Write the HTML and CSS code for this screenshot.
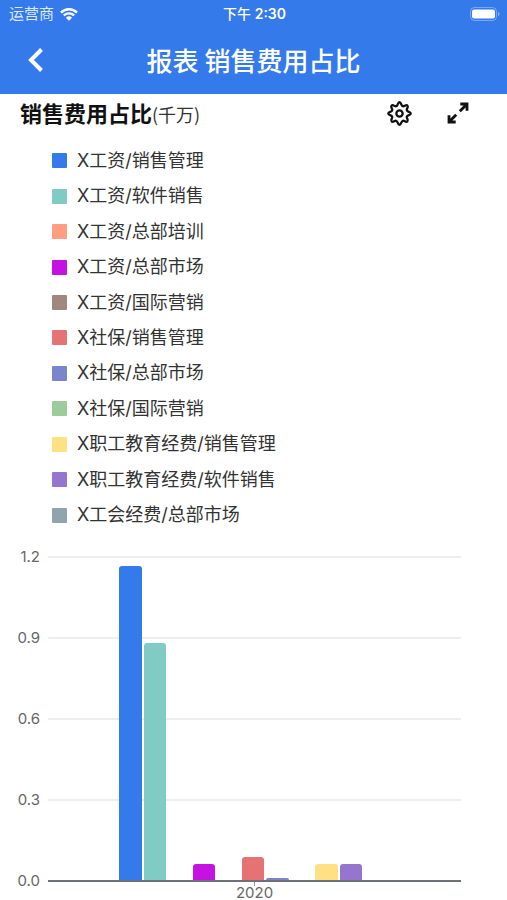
FILE: index.html
```html
<!DOCTYPE html>
<html lang="zh-CN">
<head>
<meta charset="utf-8">
<meta name="viewport" content="width=device-width, initial-scale=1">
<title>报表 销售费用占比</title>
<link rel="stylesheet" href="styles.css">
</head>
<body>
<header class="top">
  <div class="status">
    <div class="carrier">
      <span>运营商</span>
      <svg class="wifi" viewBox="0 0 18 13" aria-hidden="true">
        <path d="M1 4.6a11.4 11.4 0 0 1 16 0M3.8 7.5a7.4 7.4 0 0 1 10.4 0" fill="none" stroke="#fff" stroke-width="2.4"/>
        <path d="M9 12.8 5.9 9.7a4.5 4.5 0 0 1 6.2 0z" fill="#fff"/>
      </svg>
    </div>
    <span class="time">下午 <b>2:30</b></span>
    <svg class="battery" viewBox="0 0 30 14" aria-hidden="true">
      <rect x="0.5" y="0.5" width="26" height="13" rx="4" fill="none" stroke="#fff" stroke-opacity=".35"/>
      <rect x="2" y="2.5" width="23" height="9" rx="2.2" fill="#fff"/>
      <path d="M28 5v4c2-.6 2-3.400 0-4z" fill="#fff" fill-opacity=".4"/>
    </svg>
  </div>
  <nav class="bar">
    <button class="icon-button" type="button" aria-label="返回">
      <svg class="back" viewBox="0 0 16 24" aria-hidden="true"><path d="M13.500 1.500 3 12l10.500 10.500" fill="none" stroke="#fff" stroke-width="4"/></svg>
    </button>
    <h1>报表 销售费用占比</h1>
  </nav>
</header>
<main>
  <div class="heading">
    <h2>销售费用占比<small>(千万)</small></h2>
    <button class="icon-button" type="button" aria-label="设置">
      <svg class="gear" viewBox="0 0 24 24" aria-hidden="true" fill="none" stroke="#111" stroke-width="2.200" stroke-linejoin="round">
        <path d="M12 1.200C13.900 1.200 13.300 4.500 15.200 5C16.700 5.400 18.300 3 19.600 4.400C21 5.700 18.600 7.300 19 8.800C19.500 10.700 22.800 10.100 22.800 12C22.800 13.900 19.500 13.300 19 15.200C18.600 16.700 21 18.300 19.600 19.600C18.300 21 16.700 18.600 15.200 19C13.300 19.500 13.900 22.800 12 22.800C10.100 22.800 10.700 19.500 8.800 19C7.300 18.600 5.700 21 4.400 19.600C3 18.300 5.400 16.700 5 15.200C4.500 13.300 1.200 13.900 1.200 12C1.200 10.100 4.500 10.700 5 8.800C5.400 7.300 3 5.700 4.400 4.400C5.700 3 7.300 5.400 8.800 5C10.700 4.500 10.100 1.200 12 1.200Z"/>
        <circle cx="12" cy="12" r="3"/>
      </svg>
    </button>
    <button class="icon-button" type="button" aria-label="全屏">
      <svg class="expand" viewBox="0 0 22 22" aria-hidden="true" fill="none" stroke="#111" stroke-width="2.800">
        <path d="M13.300 2h6.700v6.700M19.800 2.200 12.800 9.200M8.700 20H2v-6.700M2.200 19.800 9.200 12.800"/>
      </svg>
    </button>
  </div>
  <ul class="legend">
    <li><i class="blue"></i>X工资/销售管理</li>
    <li><i class="teal"></i>X工资/软件销售</li>
    <li><i class="orange"></i>X工资/总部培训</li>
    <li><i class="magenta"></i>X工资/总部市场</li>
    <li><i class="brown"></i>X工资/国际营销</li>
    <li><i class="red"></i>X社保/销售管理</li>
    <li><i class="indigo"></i>X社保/总部市场</li>
    <li><i class="green"></i>X社保/国际营销</li>
    <li><i class="yellow"></i>X职工教育经费/销售管理</li>
    <li><i class="purple"></i>X职工教育经费/软件销售</li>
    <li><i class="slate"></i>X工会经费/总部市场</li>
  </ul>
  <section class="chart" aria-label="销售费用占比">
    <div class="scale"><span>1.2</span><span>0.9</span><span>0.6</span><span>0.3</span><span>0.0</span></div>
    <div class="plot">
      <div class="lines"><b></b><b></b><b></b><b></b></div>
      <div class="bars">
        <i class="blue" style="height:96.8%"></i>
        <i class="teal" style="height:73.2%"></i>
        <i class="orange" style="height:0%"></i>
        <i class="magenta" style="height:4.8%"></i>
        <i class="brown" style="height:0%"></i>
        <i class="red" style="height:7.1%"></i>
        <i class="indigo" style="height:0.6%"></i>
        <i class="green" style="height:0%"></i>
        <i class="yellow" style="height:4.8%"></i>
        <i class="purple" style="height:4.8%"></i>
        <i class="slate" style="height:0%"></i>
      </div>
    </div>
    <div class="category">2020</div>
  </section>
</main>
</body>
</html>
```
FILE: styles.css
```css
* { box-sizing: border-box; }

body {
  margin: 0;
  background: #fff;
  color: #333;
  font-family: Inter, "Noto Sans CJK SC", sans-serif;
}

.top {
  background: #347aeb;
  color: #fff;
}

.status {
  display: grid;
  grid-template-columns: 1fr auto 1fr;
  align-items: center;
  height: 28px;
  padding: 0 7px 0 9px;
  font-size: 14px;
  line-height: 20px;
}

.carrier {
  display: flex;
  align-items: center;
  gap: 6px;
  color: #dde9fc;
  font-size: 15px;
}

.wifi { width: 18px; height: 13px; }
.time { font-weight: 500; }
.time b { font-weight: 600; }
.battery { width: 30px; height: 14px; justify-self: end; }

.bar {
  display: grid;
  grid-template-columns: 72px 1fr 72px;
  align-items: center;
  height: 66px;
  padding-bottom: 3px;
}

.icon-button {
  display: flex;
  align-items: center;
  justify-content: center;
  padding: 0;
  border: 0;
  background: none;
}

.back { width: 16px; height: 24px; }

h1 {
  margin: 0;
  text-align: center;
  font: 500 26px/40px "Noto Sans CJK SC", sans-serif;
}

.heading {
  display: flex;
  align-items: center;
  gap: 35px;
  height: 38px;
  padding: 0 38px 0 20px;
}

h2 {
  flex: 1;
  margin: 0;
  color: #111;
  font: 700 22px/32px "Noto Sans CJK SC", sans-serif;
}

h2 small {
  color: #333;
  font-size: 18px;
  font-weight: 400;
}

.gear { width: 25px; height: 25px; }
.expand { width: 22px; height: 22px; }

.legend {
  display: flex;
  flex-direction: column;
  height: 390px;
  margin: 11px 0 0;
  padding: 0 52px;
  list-style: none;
  font-size: 18px;
  line-height: 24px;
}

.legend li {
  flex: 1;
  display: flex;
  align-items: center;
  gap: 10px;
}

.legend i {
  width: 15px;
  height: 15px;
  border-radius: 1px;
}

.chart {
  display: grid;
  grid-template-columns: 40px 1fr;
  column-gap: 8px;
  padding: 23px 46px 0 0;
  color: #666;
  font-size: 15px;
  line-height: 20px;
}

.scale {
  display: flex;
  flex-direction: column;
  justify-content: space-between;
  margin: -9px 0;
  text-align: right;
}

.plot {
  display: grid;
  height: 326px;
  border-bottom: 2px solid #6e7079;
}

.lines, .bars { grid-area: 1 / 1; }

.lines {
  display: grid;
  grid-template-rows: repeat(4, 1fr);
}

.lines b { border-top: 2px solid #eee; }

.bars {
  display: grid;
  grid-template-columns: repeat(11, 1fr);
  column-gap: 2px;
  align-items: end;
  padding: 0 18% 0 17.3%;
}

.bars i { border-radius: 3px 3px 0 0; }

.category {
  display: flex;
  flex-direction: column;
  align-items: center;
  grid-column: 2;
  line-height: 14px;
}

.category::before {
  content: "";
  width: 1px;
  height: 4px;
  background: #999;
}

.blue { background: #347aeb; }
.teal { background: #80cbc4; }
.orange { background: #ff9e80; }
.magenta { background: #c511e2; }
.brown { background: #a1887f; }
.red { background: #e57373; }
.indigo { background: #7986cb; }
.green { background: #9ccc9c; }
.yellow { background: #ffe082; }
.purple { background: #9575cd; }
.slate { background: #90a4ae; }
```
